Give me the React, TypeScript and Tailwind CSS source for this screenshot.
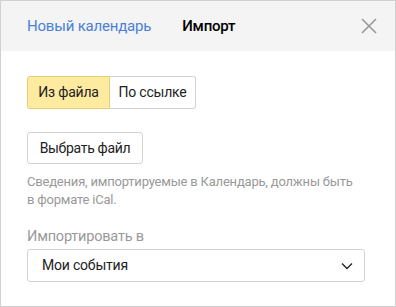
import React from 'react';

export default function App() {
  return (
    <div
      className="w-[396px] h-[307px] border border-[#d0d0d0] bg-white flex flex-col"
      style={{ fontFamily: 'Roboto, "Liberation Sans", sans-serif' }}
    >
      {/* Header */}
      <div className="h-[50px] bg-[#f4f4f4] flex items-center pl-[26px] pr-[18px] shrink-0">
        <span className="text-[15px] tracking-[-0.2px] text-[#4a80d6]">Новый календарь</span>
        <span className="ml-[31px] text-[15px] tracking-[-0.2px] font-medium text-black">Импорт</span>
        <button className="ml-auto w-[16px] h-[16px] flex items-center justify-center">
          <svg width="16" height="16" viewBox="0 0 16 16" fill="none" stroke="#999" strokeWidth="1.6">
            <path d="M1 1L15 15M15 1L1 15" />
          </svg>
        </button>
      </div>

      {/* Body */}
      <div className="flex flex-col px-[26px] pt-[25px]">
        <div className="flex h-[33px] w-[169px]">
          <div className="w-[83px] flex items-center justify-center bg-[#ffeba0] border border-[#e6cf7b] rounded-l-[3px] text-[14px] tracking-[-0.2px] text-[#222]">
            Из файла
          </div>
          <div className="flex-1 flex items-center justify-center bg-white border border-l-0 border-[#d3d3d3] rounded-r-[3px] text-[14px] tracking-[-0.2px] text-[#222]">
            По ссылке
          </div>
        </div>

        <button className="mt-[23px] w-[116px] h-[32px] border border-[#d3d3d3] rounded-[3px] bg-white text-[14px] tracking-[-0.3px] text-[#222]">
          Выбрать файл
        </button>

        <p className="mt-[9px] text-[13px] tracking-[-0.2px] leading-[18px] text-[#999] whitespace-nowrap">
          Сведения, импортируемые в Календарь, должны быть
          <br />в формате iCal.
        </p>

        <div className="mt-[19px] text-[14.5px] tracking-[-0.2px] text-[#999] leading-[18px]">Импортировать в</div>

        <div className="mt-[3px] w-[338px] h-[33px] border border-[#d3d3d3] rounded-[3px] flex items-center pl-[14px] pr-[11px]">
          <span className="text-[14px] tracking-[-0.2px] text-[#222]">Мои события</span>
          <svg className="ml-auto" width="12" height="8" viewBox="0 0 12 8" fill="none" stroke="#222" strokeWidth="1.3">
            <path d="M1 1.5L6 6.5L11 1.5" />
          </svg>
        </div>
      </div>
    </div>
  );
}
